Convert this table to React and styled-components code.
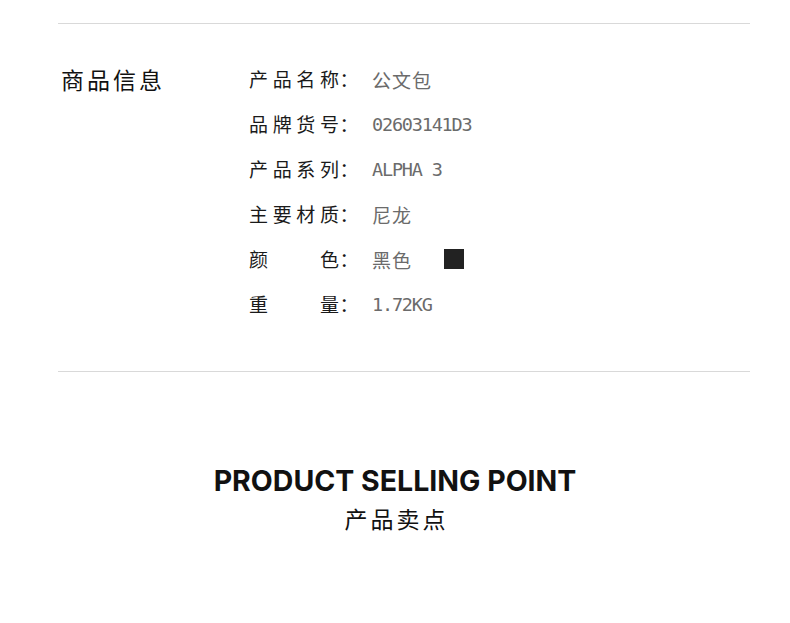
import React from 'react'
import styled, { createGlobalStyle } from 'styled-components'

const GlobalStyle = createGlobalStyle`
  html, body {
    margin: 0;
    padding: 0;
    background: #ffffff;
  }
  body {
    font-family: "Noto Sans CJK SC", "Noto Sans", sans-serif;
  }
`

const specs = [
  { label: '产品名称', value: '公文包' },
  { label: '品牌货号', value: '02603141D3', mono: true },
  { label: '产品系列', value: 'ALPHA 3', mono: true },
  { label: '主要材质', value: '尼龙' },
  { label: '颜色', value: '黑色', swatch: '#222222' },
  { label: '重量', value: '1.72KG', mono: true },
]

const App = () => {
  return (
    <Page>
      <GlobalStyle />
      <Divider />
      <InfoSection>
        <SectionTitle>商品信息</SectionTitle>
        <SpecList>
          {specs.map((item, index) => {
            return (
              <SpecRow key={index}>
                <Label>
                  <LabelText>{item.label}</LabelText>
                  <Colon>：</Colon>
                </Label>
                <Value $mono={item.mono}>{item.value}</Value>
                {item.swatch && <Swatch $color={item.swatch} />}
              </SpecRow>
            )
          })}
        </SpecList>
      </InfoSection>
      <Divider />
      <SellingHeader>
        <h2>PRODUCT SELLING POINT</h2>
        <p>产品卖点</p>
      </SellingHeader>
    </Page>
  )
}

const Page = styled.div`
  width: 790px;
  height: 623px;
  padding: 23px 40px 0 58px;
  box-sizing: border-box;
  overflow: hidden;
`
const Divider = styled.div`
  height: 1px;
  background: #d9d9d9;
`
const InfoSection = styled.div`
  display: flex;
  padding: 32px 0 45px 3px;
`
const SectionTitle = styled.h1`
  width: 188px;
  margin: 0;
  font-size: 23px;
  font-weight: 400;
  letter-spacing: 3px;
  line-height: 46px;
  color: #111;
`
const SpecList = styled.div`
  display: flex;
  flex-direction: column;
`
const SpecRow = styled.div`
  display: flex;
  align-items: center;
  height: 45px;
`
const Label = styled.div`
  display: flex;
  width: 123px;
  font-size: 19px;
  color: #1a1a1a;
`
const LabelText = styled.span`
  width: 90px;
  text-align: justify;
  text-align-last: justify;
`
const Colon = styled.span`
  width: 20px;
  text-align: center;
`
const Value = styled.span`
  font-family: ${p => (p.$mono ? '"DejaVu Sans Mono", monospace' : '"Noto Sans CJK SC", sans-serif')};
  font-size: ${p => (p.$mono ? '18.5px' : '19px')};
  letter-spacing: ${p => (p.$mono ? '-1.2px' : '1px')};
  color: #6b6b6b;
  min-width: 72px;
  padding-top: 2px;
`
const Swatch = styled.div`
  width: 20px;
  height: 20px;
  background: ${p => p.$color};
`
const SellingHeader = styled.div`
  text-align: center;
  padding-top: 92px;
  margin-left: -18px;
  h2 {
    margin: 0;
    font-family: Inter, "Liberation Sans", sans-serif;
    font-weight: 700;
    font-size: 28.5px;
    line-height: 34px;
    color: #111;
  }
  p {
    margin: 3px 0 0;
    padding-left: 3px;
    font-size: 23px;
    letter-spacing: 3px;
    color: #111;
  }
`

export default App
